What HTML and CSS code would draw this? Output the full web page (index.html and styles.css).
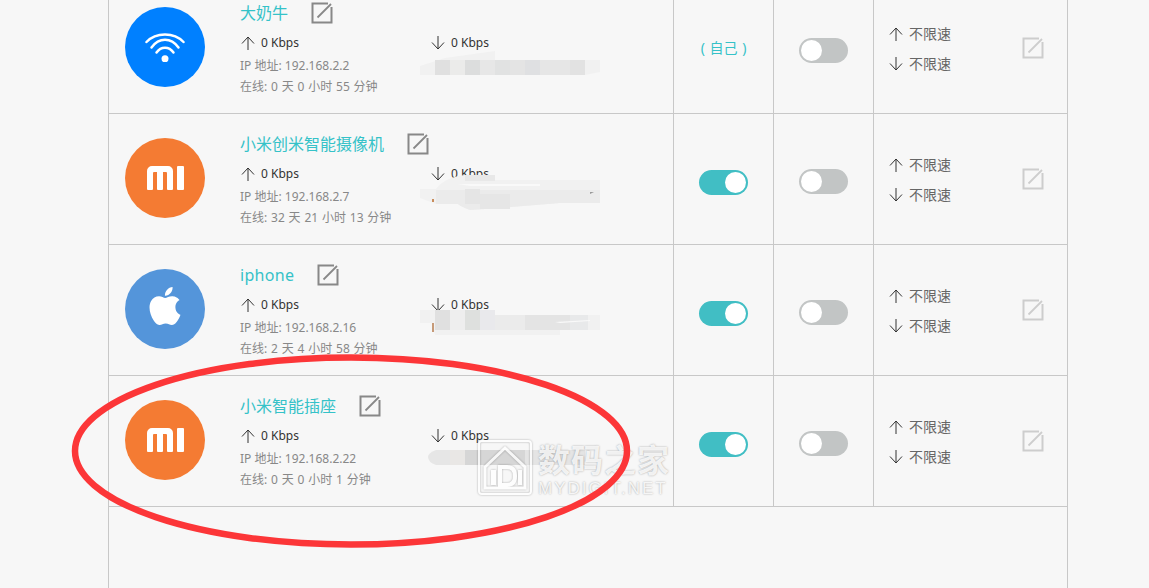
FILE: index.html
```html
<!DOCTYPE html>
<html lang="zh-CN">
<head>
<meta charset="utf-8">
<title>设备列表</title>
<link rel="stylesheet" href="styles.css">
</head>
<body>
<svg class="defs" width="0" height="0" aria-hidden="true">
  <symbol id="up" viewBox="0 0 14 14"><path d="M7 14V1M1 7.500L7 1l6 6.500" fill="none" stroke="currentColor" stroke-width="1"/></symbol>
  <symbol id="down" viewBox="0 0 14 14"><path d="M7 0v13M1 6.500L7 13l6-6.500" fill="none" stroke="currentColor" stroke-width="1"/></symbol>
  <symbol id="edit" viewBox="0 0 22 22"><path d="M17 1.500H1.500V20.500H20.500V5" fill="none" stroke="currentColor" stroke-width="2"/><path d="M6.500 15.500L20 2" fill="none" stroke="currentColor" stroke-width="1.800"/></symbol>
  <symbol id="mi" viewBox="0 0 37 24"><path d="M0 5a5 5 0 0 1 5-5H21a5 5 0 0 1 5 5V23a1 1 0 0 1-1 1H21a1 1 0 0 1-1-1V7a1 1 0 0 0-1-1H16V23a1 1 0 0 1-1 1H11a1 1 0 0 1-1-1V6H7a1 1 0 0 0-1 1V23a1 1 0 0 1-1 1H1a1 1 0 0 1-1-1z" fill="#fff"/><rect x="30" width="7" height="24" rx="1" fill="#fff"/></symbol>
</svg>

<main class="page">
  <section class="table">
    <article class="row">
      <div class="cell device">
        <div class="avatar avatar-wifi">
          <svg class="icon-wifi" viewBox="0 0 40 30"><path d="M1.500 10C11 0 29 0 38.500 10" fill="none" stroke="#fff" stroke-width="2.500" stroke-linecap="round"/><path d="M6.500 15.500C14 5.200 26 5.200 33.500 15.500" fill="none" stroke="#fff" stroke-width="2.500" stroke-linecap="round"/><path d="M11.500 20.500C16 14.100 24 14.100 28.500 20.500" fill="none" stroke="#fff" stroke-width="2.500" stroke-linecap="round"/><circle cx="20" cy="26.800" r="3.500" fill="#fff"/></svg>
        </div>
        <div class="info">
          <div class="name"><span>大奶牛</span><svg class="edit"><use href="#edit"/></svg></div>
          <div class="rates">
            <span class="rate"><svg class="arrow"><use href="#up"/></svg>0 Kbps</span>
            <span class="rate"><svg class="arrow"><use href="#down"/></svg>0 Kbps</span>
          </div>
          <div class="meta meta-ip">IP 地址: 192.168.2.2</div>
          <div class="meta meta-time">在线: 0 天 0 小时 55 分钟</div>
        </div>
      </div>
      <div class="cell switch-cell"><span class="self">( 自己 )</span></div>
      <div class="cell switch-cell"><span class="toggle toggle-off"><i class="knob"></i></span></div>
      <div class="cell limit">
        <div class="limit-list">
          <div class="limit-line"><svg class="arrow"><use href="#up"/></svg>不限速</div>
          <div class="limit-line"><svg class="arrow"><use href="#down"/></svg>不限速</div>
        </div>
        <svg class="edit edit-light"><use href="#edit"/></svg>
      </div>
    </article>

    <article class="row">
      <div class="cell device">
        <div class="avatar avatar-mi"><svg class="icon-mi"><use href="#mi"/></svg></div>
        <div class="info">
          <div class="name"><span>小米创米智能摄像机</span><svg class="edit"><use href="#edit"/></svg></div>
          <div class="rates">
            <span class="rate"><svg class="arrow"><use href="#up"/></svg>0 Kbps</span>
            <span class="rate"><svg class="arrow"><use href="#down"/></svg>0 Kbps</span>
          </div>
          <div class="meta meta-ip">IP 地址: 192.168.2.7</div>
          <div class="meta meta-time">在线: 32 天 21 小时 13 分钟</div>
        </div>
      </div>
      <div class="cell switch-cell"><span class="toggle toggle-on"><i class="knob"></i></span></div>
      <div class="cell switch-cell"><span class="toggle toggle-off"><i class="knob"></i></span></div>
      <div class="cell limit">
        <div class="limit-list">
          <div class="limit-line"><svg class="arrow"><use href="#up"/></svg>不限速</div>
          <div class="limit-line"><svg class="arrow"><use href="#down"/></svg>不限速</div>
        </div>
        <svg class="edit edit-light"><use href="#edit"/></svg>
      </div>
    </article>

    <article class="row">
      <div class="cell device">
        <div class="avatar avatar-apple">
          <svg class="icon-apple" viewBox="0 0 24 24"><path fill="#fff" d="M12.152 6.896c-.948 0-2.415-1.078-3.96-1.04-2.04.027-3.91 1.183-4.961 3.014-2.117 3.675-.546 9.103 1.519 12.09 1.013 1.454 2.208 3.09 3.792 3.039 1.52-.065 2.09-.987 3.935-.987 1.831 0 2.35.987 3.96.948 1.637-.026 2.676-1.48 3.676-2.948 1.156-1.688 1.636-3.325 1.662-3.415-.039-.013-3.182-1.221-3.22-4.857-.026-3.04 2.48-4.494 2.597-4.559-1.429-2.09-3.623-2.324-4.39-2.376-2-.156-3.675 1.09-4.61 1.09zM15.53 3.83c.843-1.012 1.4-2.427 1.245-3.83-1.207.052-2.662.805-3.532 1.818-.78.896-1.454 2.338-1.273 3.714 1.338.104 2.715-.688 3.559-1.701"/></svg>
        </div>
        <div class="info">
          <div class="name"><span class="latin">iphone</span><svg class="edit"><use href="#edit"/></svg></div>
          <div class="rates">
            <span class="rate"><svg class="arrow"><use href="#up"/></svg>0 Kbps</span>
            <span class="rate"><svg class="arrow"><use href="#down"/></svg>0 Kbps</span>
          </div>
          <div class="meta meta-ip">IP 地址: 192.168.2.16</div>
          <div class="meta meta-time">在线: 2 天 4 小时 58 分钟</div>
        </div>
      </div>
      <div class="cell switch-cell"><span class="toggle toggle-on"><i class="knob"></i></span></div>
      <div class="cell switch-cell"><span class="toggle toggle-off"><i class="knob"></i></span></div>
      <div class="cell limit">
        <div class="limit-list">
          <div class="limit-line"><svg class="arrow"><use href="#up"/></svg>不限速</div>
          <div class="limit-line"><svg class="arrow"><use href="#down"/></svg>不限速</div>
        </div>
        <svg class="edit edit-light"><use href="#edit"/></svg>
      </div>
    </article>

    <article class="row">
      <div class="cell device">
        <div class="avatar avatar-mi"><svg class="icon-mi"><use href="#mi"/></svg></div>
        <div class="info">
          <div class="name"><span>小米智能插座</span><svg class="edit"><use href="#edit"/></svg></div>
          <div class="rates">
            <span class="rate"><svg class="arrow"><use href="#up"/></svg>0 Kbps</span>
            <span class="rate"><svg class="arrow"><use href="#down"/></svg>0 Kbps</span>
          </div>
          <div class="meta meta-ip">IP 地址: 192.168.2.22</div>
          <div class="meta meta-time">在线: 0 天 0 小时 1 分钟</div>
        </div>
      </div>
      <div class="cell switch-cell"><span class="toggle toggle-on"><i class="knob"></i></span></div>
      <div class="cell switch-cell"><span class="toggle toggle-off"><i class="knob"></i></span></div>
      <div class="cell limit">
        <div class="limit-list">
          <div class="limit-line"><svg class="arrow"><use href="#up"/></svg>不限速</div>
          <div class="limit-line"><svg class="arrow"><use href="#down"/></svg>不限速</div>
        </div>
        <svg class="edit edit-light"><use href="#edit"/></svg>
      </div>
    </article>
  </section>

  <svg class="mosaic" viewBox="0 0 1149 588" aria-hidden="true">
    <!-- row 1 -->
    <path d="M420 66L445 58L495 51V60H600V72L585 75H420z" fill="#f1f1f1"/>
    <rect x="435" y="60" width="15" height="15" fill="#e0e0e0"/>
    <rect x="450" y="60" width="15" height="15" fill="#ebebea"/>
    <rect x="465" y="60" width="15" height="15" fill="#dcdddd"/>
    <rect x="480" y="60" width="15" height="15" fill="#e7e7e7"/>
    <rect x="495" y="60" width="15" height="15" fill="#e1e2e2"/>
    <rect x="510" y="60" width="15" height="15" fill="#e4e4e4"/>
    <rect x="525" y="60" width="15" height="15" fill="#dfe0e2"/>
    <rect x="540" y="60" width="30" height="15" fill="#e6e6e6"/>
    <rect x="570" y="60" width="15" height="15" fill="#e2e2e2"/>
    <!-- row 2 -->
    <path d="M420 189H436Q445 177 465 175H495V180H600V203H560L500 208L470 210Q460 206 458 204H436L420 198z" fill="#f1f1f1"/>
    <path d="M436 190H600V203H560L500 208L470 210Q460 206 458 204H436z" fill="#ebebeb"/>
    <rect x="465" y="189" width="15" height="15" fill="#e5e5e5"/>
    <rect x="480" y="194" width="30" height="15" fill="#e6e6e6"/>
    <rect x="465" y="175" width="30" height="6" fill="#e8e8e8"/>
    <path d="M458 184H540V186H470z" fill="#f9f9f9"/>
    <rect x="432" y="199" width="2" height="3" fill="#c98d5c"/>
    <path d="M590 192h4l-4 2z" fill="#999"/>
    <!-- row 3 -->
    <path d="M420 310H495V315H600V330H560V335H435L434 331H432V323H420z" fill="#f1f1f1"/>
    <rect x="435" y="310" width="15" height="20" fill="#e0e0e0"/>
    <rect x="450" y="310" width="15" height="20" fill="#eeeeee"/>
    <rect x="465" y="310" width="15" height="20" fill="#dee0de"/>
    <rect x="480" y="310" width="15" height="20" fill="#e9e9ec"/>
    <rect x="495" y="315" width="30" height="15" fill="#ebebeb"/>
    <rect x="525" y="315" width="45" height="15" fill="#e4e4e4"/>
    <rect x="570" y="315" width="18" height="15" fill="#e8e9ea"/>
    <path d="M555 322L590 320V321L560 323z" fill="#f9f9f9"/>
    <rect x="432" y="323" width="2" height="9" fill="#c69a78"/>
    <!-- row 4 -->
    <path d="M436 450H450V465H436Q428 462 428 457Q428 453 436 450z" fill="#e6e6e6"/>
    <rect x="450" y="450" width="15" height="15" fill="#e9e7e5"/>
    <rect x="465" y="450" width="60" height="15" fill="#d6d6d6"/>
    <rect x="525" y="450" width="60" height="15" fill="#e4e4e4"/>
  </svg>

  <div class="watermark" aria-hidden="true">
    <svg class="wm-logo" viewBox="0 0 54 55">
      <rect x="1" y="1" width="52" height="53" rx="3" fill="none" stroke="#fff" stroke-width="2"/>
      <path d="M7 27L27 8L47 27V48H7z" fill="none" stroke="#fff" stroke-width="3"/>
      <path d="M13 30H18V45H13zM40 30H44V45H40z" fill="#fff"/>
      <path d="M22 27H29Q37 27 37 36Q37 45 29 45H22z" fill="none" stroke="#fff" stroke-width="4"/>
    </svg>
    <div class="wm-text">
      <div class="wm-cn">数码之家</div>
      <div class="wm-en">MYDIGIT.NET</div>
    </div>
  </div>

  <svg class="circle-mark" viewBox="0 0 1149 588" aria-hidden="true">
    <ellipse cx="351" cy="451" rx="276" ry="93.500" fill="none" stroke="#fc3638" stroke-width="6.500"/>
  </svg>
</main>
</body>
</html>
```

FILE: styles.css
```css
* { box-sizing: border-box; }

html, body {
  margin: 0;
  padding: 0;
  background: #f7f7f7;
}

.defs { position: absolute; }

.page {
  position: relative;
  width: 1149px;
  height: 588px;
  overflow: hidden;
  background: #f7f7f7;
  font-family: "Noto Sans", "Noto Sans CJK SC", sans-serif;
  font-size: 12px;
  color: #888;
}

.table {
  width: 960px;
  height: 622px;
  margin: -17px 0 0 108px;
  border-left: 1px solid #c8c8c8;
  border-right: 1px solid #c8c8c8;
}

.row {
  display: grid;
  grid-template-columns: 565px 100px 100px 193px;
  height: 131px;
  border-bottom: 1px solid #c8c8c8;
}

.cell { border-right: 1px solid #c8c8c8; }
.cell:last-child { border-right: 0; }

.device {
  display: flex;
  gap: 35px;
  padding: 24px 0 0 16px;
}

.avatar {
  display: flex;
  align-items: center;
  justify-content: center;
  flex: none;
  width: 80px;
  height: 80px;
  border-radius: 50%;
}
.avatar-wifi { background: #0080ff; }
.avatar-mi { background: #f47b33; }
.avatar-apple { background: #5495da; }

.icon-wifi { width: 40px; height: 30px; margin-bottom: 1px; }
.icon-mi { width: 37px; height: 24px; }
.icon-apple { width: 38px; height: 38px; margin-bottom: 6px; }

.info {
  flex: 1;
  margin-top: -4px;
}

.name {
  display: flex;
  align-items: center;
  gap: 23px;
  height: 20px;
  font-size: 16px;
  line-height: 20px;
  color: #35c2c8;
}
.latin { letter-spacing: .3px; }

.edit {
  flex: none;
  width: 22px;
  height: 22px;
  color: #888;
}
.edit-light { color: #cdcdcd; }

.rates {
  display: flex;
  height: 22px;
  margin-top: 9px;
  line-height: 22px;
  color: #333;
}

.rate {
  display: flex;
  align-items: center;
  width: 190px;
}

.arrow {
  flex: none;
  width: 14px;
  height: 14px;
  margin: 0 6px 0 1px;
  color: #333;
}

.meta {
  height: 22px;
  line-height: 22px;
  color: #888;
}
.meta-ip { line-height: 24px; }
.meta-time { word-spacing: .7px; }

.switch-cell {
  display: flex;
  justify-content: center;
  padding-top: 55px;
}

.self {
  margin-top: -5px;
  font-size: 14px;
  line-height: 30px;
  height: 30px;
  color: #35c2c8;
  word-spacing: 1px;
}

.toggle {
  display: block;
  width: 49px;
  height: 25px;
  border-radius: 13px;
  padding: 2px;
}
.toggle-on {
  display: flex;
  justify-content: flex-end;
  background: #41bec4;
  margin-top: 1px;
}
.toggle-off { background: #c2c5c5; }

.knob {
  display: block;
  width: 21px;
  height: 21px;
  border-radius: 50%;
  background: #fff;
}

.limit {
  display: flex;
  align-items: flex-start;
  padding: 36px 0 0 14px;
}

.limit-list { width: 134px; }

.limit-line {
  display: flex;
  align-items: center;
  height: 30px;
  font-size: 14px;
  line-height: 30px;
  color: #666;
}

.limit .arrow { margin-right: 6px; }
.edit-light { margin-top: 18px; }

.mosaic,
.circle-mark {
  position: absolute;
  top: 0;
  left: 0;
  width: 1149px;
  height: 588px;
  pointer-events: none;
}

.watermark {
  position: absolute;
  top: 440px;
  left: 478px;
  display: flex;
  gap: 6px;
}

.wm-logo {
  width: 54px;
  height: 55px;
  opacity: .8;
  filter: drop-shadow(0 0 1px rgba(0, 0, 0, .35));
}

.wm-text { width: 132px; }

.wm-cn {
  height: 36px;
  font-family: "Noto Sans CJK SC", sans-serif;
  font-size: 32px;
  font-weight: 700;
  line-height: 36px;
  letter-spacing: 1px;
  white-space: nowrap;
  color: rgba(255, 255, 255, .85);
  text-shadow: 0 0 2px rgba(0, 0, 0, .35);
}

.wm-en {
  margin-top: 4px;
  font-family: "Liberation Sans", sans-serif;
  font-size: 17px;
  line-height: 17px;
  letter-spacing: 2px;
  white-space: nowrap;
  color: rgba(255, 255, 255, .85);
  text-shadow: 0 0 2px rgba(0, 0, 0, .35);
}
```
